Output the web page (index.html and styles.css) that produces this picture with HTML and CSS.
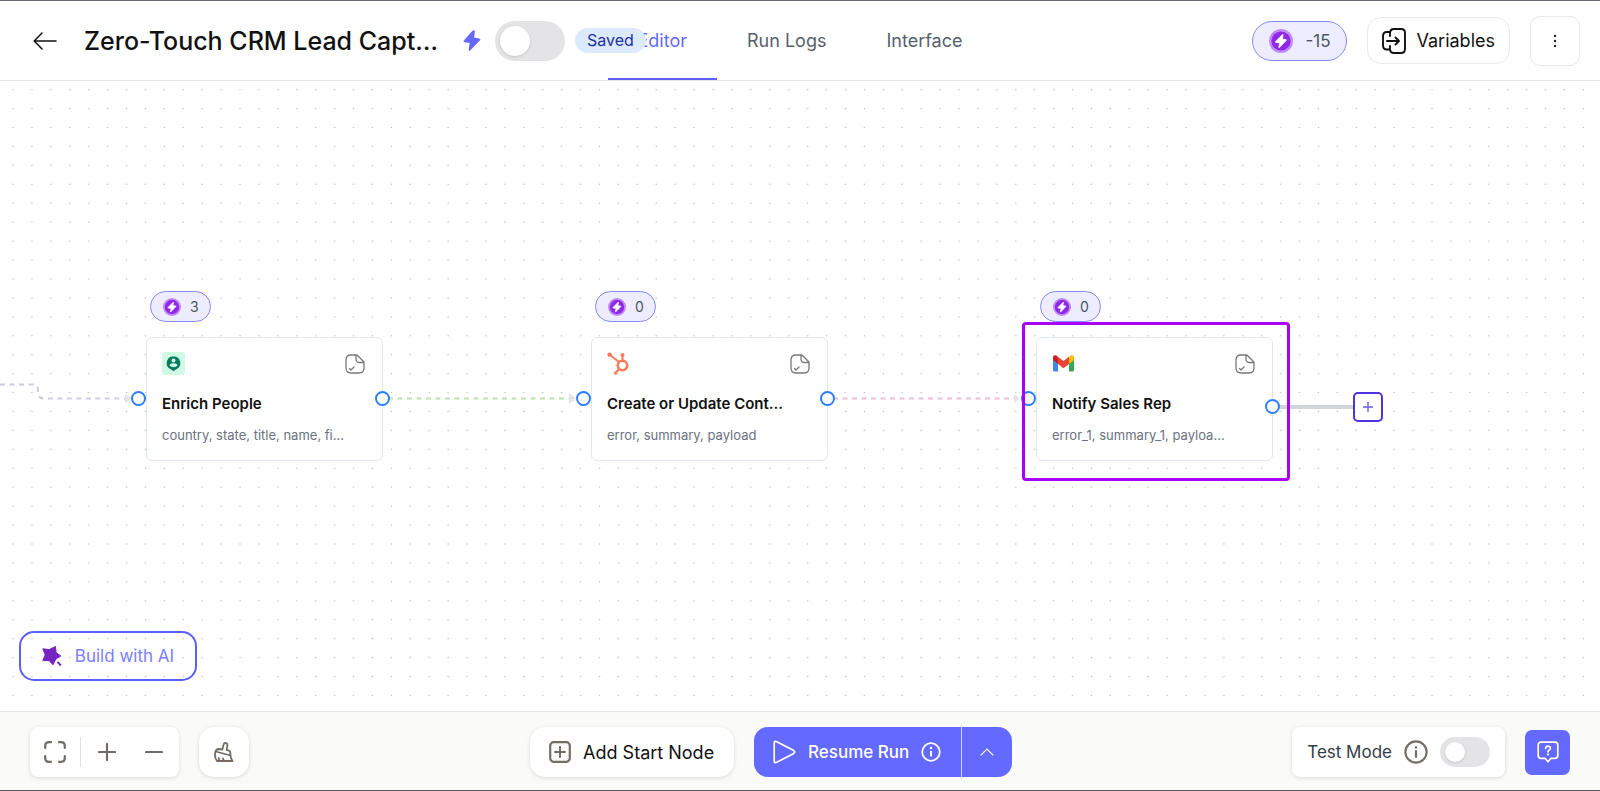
FILE: index.html
```html
<!DOCTYPE html>
<html lang="en">
<head>
<meta charset="utf-8">
<title>Workflow editor</title>
<link rel="stylesheet" href="styles.css">
</head>
<body>
<svg class="defs" aria-hidden="true">
  <symbol id="credit" viewBox="0 0 24 24">
    <circle cx="12" cy="12" r="12" fill="#c08af8"/>
    <circle cx="12" cy="12" r="9.6" fill="#9029e6"/>
    <path d="M13.600 5.500 6.600 12.600q-.5.700.3.800l3.800.5-.9 4.300q0 .8.600.3l6.800-7.100q.5-.7-.3-.8l-3.600-.5.800-4.200q0-.8-.5-.4z" fill="#fff" stroke="#fff" stroke-width=".8"/>
  </symbol>
  <symbol id="note" viewBox="0 0 20 20">
    <path d="M11 1H6Q1 1 1 6v8q0 5 5 5h8q5 0 5-5V8.500Q18.700 7.500 18 7L13 2Q12 1 11 1zM11 1.200V5q0 3.500 3.500 3.500H19M4.500 14.500l1.500 1.500 3-3" fill="none" stroke="#777" stroke-width="1.300" stroke-linecap="round" stroke-linejoin="round"/>
  </symbol>
</svg>

<header class="header">
  <div class="header-left">
    <button class="back" aria-label="Back">
      <svg width="24" height="18" viewBox="0 0 24 18"><path d="M23 9H1.500M9 1 1.200 9 9 17" fill="none" stroke="#111" stroke-width="1.500" stroke-linecap="round" stroke-linejoin="round"/></svg>
    </button>
    <h1 class="title">Zero-Touch CRM Lead Capt…</h1>
    <svg class="bolt" width="18" height="22" viewBox="0 0 18 22"><path d="M9.500.8.800 10.500q-.8 1.300.7 1.700l5.200.8-1 6.600q0 2 1.400.9l10-10.300q.8-1.400-.8-1.800l-5.200-.8.800-6q0-2.200-2.400-.8z" fill="#646aff"/></svg>
    <input class="switch switch-large" type="checkbox" aria-label="Activate workflow">
    <span class="saved">Saved</span>
  </div>
  <nav class="tabs">
    <a class="tab tab-active" href="#editor">Editor</a>
    <a class="tab" href="#logs">Run Logs</a>
    <a class="tab" href="#interface">Interface</a>
  </nav>
  <div class="header-right">
    <div class="credits">
      <svg width="24" height="24"><use href="#credit"/></svg>
      <span>-15</span>
    </div>
    <button class="outline variables">
      <svg width="24" height="26" viewBox="0 0 24 26"><path d="M8 8V5.500Q8 1 12 1h7q4 0 4 4v16q0 4-4 4h-7q-4 0-4-4v-3M8 4H5Q1 4 1 8v9.500q0 4 4 4h3M5 13h11.500M13.500 9.500 17 13l-3.500 3.500" fill="none" stroke="#111" stroke-width="1.900" stroke-linecap="round" stroke-linejoin="round"/></svg>
      Variables
    </button>
    <button class="outline more" aria-label="More">
      <svg width="4" height="14" viewBox="0 0 4 14"><g fill="#222"><circle cx="2" cy="2" r="1.200"/><circle cx="2" cy="7" r="1.200"/><circle cx="2" cy="12" r="1.200"/></g></svg>
    </button>
  </div>
</header>

<main class="canvas">
  <svg class="layer" width="100%" height="100%" aria-hidden="true">
    <defs>
      <pattern id="dots" x="3.600" y="-.8" width="18.920" height="18.930" patternUnits="userSpaceOnUse">
        <circle cx="9.400" cy="9.400" r=".8" fill="#bcbfc6"/>
      </pattern>
    </defs>
    <rect width="100%" height="100%" fill="url(#dots)"/>
    <g fill="none" stroke-width="2.600" stroke-dasharray="5 4.500">
      <path d="M0 303.500H32Q38 303.500 38 309v3q0 5.500 6 5.500H126" stroke="#cfc9ea" stroke-width="2"/>
      <path d="M388 317.500H570" stroke="#c9e6c2"/>
      <path d="M833 317.500H1014" stroke="#eccbdf"/>
    </g>
    <path d="M1279 326h75" stroke="#d1d5dc" stroke-width="4"/>
    <g fill="#e4e4e8"><path d="m125 313 7 4.500-7 4.500zM569 312l7 5.500-7 5.500zM1014 313l6 4.500-6 4.500z"/></g>
  </svg>

  <article class="node node-enrich">
    <div class="cost"><svg width="18" height="18"><use href="#credit"/></svg>3</div>
    <div class="card">
      <div class="card-top">
        <svg width="23" height="23" viewBox="0 0 23 23"><rect width="23" height="23" rx="3" fill="#d0fae5"/><path d="M11.500 4.500a6.600 6.600 0 0 1 2.700 12.700l-2.700 2-2.700-2A6.600 6.600 0 0 1 11.500 4.500z" fill="#067a5b"/><circle cx="11.500" cy="8.500" r="2" fill="#d0fae5"/><path d="M7.500 13.500q.5-2.200 4-2.200t4 2.200q-1.500 1.800-4 1.800t-4-1.800z" fill="#d0fae5"/></svg>
        <svg width="20" height="20"><use href="#note"/></svg>
      </div>
      <h2 class="card-title">Enrich People</h2>
      <p class="card-text">country, state, title, name, fi…</p>
    </div>
    <i class="port port-in"></i><i class="port port-out"></i>
  </article>

  <article class="node node-contact">
    <div class="cost"><svg width="18" height="18"><use href="#credit"/></svg>0</div>
    <div class="card">
      <div class="card-top">
        <svg width="23" height="23" viewBox="0 0 23 23"><g fill="none" stroke="#ff7a59" stroke-width="2"><circle cx="15.500" cy="13.500" r="4.700" stroke-width="2.600"/><path d="M12 10 3 3M15.500 9V3M12 17l-3 3.500"/></g><g fill="#ff7a59"><circle cx="2.600" cy="2.600" r="2.200"/><circle cx="15.500" cy="3" r="2"/><circle cx="8.600" cy="21" r="1.800"/></g></svg>
        <svg width="20" height="20"><use href="#note"/></svg>
      </div>
      <h2 class="card-title">Create or Update Cont…</h2>
      <p class="card-text">error, summary, payload</p>
    </div>
    <i class="port port-in"></i><i class="port port-out"></i>
  </article>

  <article class="node node-notify">
    <div class="cost"><svg width="18" height="18"><use href="#credit"/></svg>0</div>
    <div class="card">
      <div class="card-top">
        <svg width="23" height="23" viewBox="0 0 23 23"><path d="M1 5v13q0 1.500 1.500 1.500H6V8.500z" fill="#4285f4"/><path d="M22 5v13q0 1.500-1.500 1.500H17V8.500z" fill="#34a853"/><path d="M17 5.500V12l5-4V5.500C22 3 19.500 2.600 18 3.800z" fill="#fbbc04"/><path d="M6 5.500V12L1 8V5.500C1 3 3.500 2.600 5 3.800z" fill="#c5221f"/><path d="M6 12V4.700l5.500 4.200L17 4.700V12l-5.500 4.200z" fill="#ea4335"/></svg>
        <svg width="20" height="20"><use href="#note"/></svg>
      </div>
      <h2 class="card-title">Notify Sales Rep</h2>
      <p class="card-text">error_1, summary_1, payloa…</p>
    </div>
    <i class="port port-in"></i><i class="port port-out port-last"></i>
  </article>

  <div class="highlight"></div>
  <button class="add-step" aria-label="Add step">
    <svg width="10" height="10" viewBox="0 0 10 10"><path d="M5 0v10M0 5h10" stroke="#6a5fe6" stroke-width="1.400"/></svg>
  </button>

  <button class="build">
    <svg width="20" height="20" viewBox="0 0 20 20"><path d="M13.500.5 14 6.500 18.800 10 13.800 13 11 18.800 7 14.500.8 14.600 3.200 8.800.8 2.800 7.200 3.600z" fill="#7424c2" stroke="#7424c2" stroke-linejoin="round"/><path d="m15.500 15.800 3.300 3.700" stroke="#7424c2" stroke-width="2"/></svg>
    Build with AI
  </button>
</main>

<footer class="footer">
  <div class="group">
    <div class="box zoom">
      <button class="tool" aria-label="Fit view"><svg width="22" height="22" viewBox="0 0 22 22"><path d="M1.200 7V5q0-3.800 3.800-3.800h2M15 1.200h2q3.800 0 3.800 3.800v2M20.800 15v2q0 3.800-3.800 3.800h-2M7 20.800H5q-3.800 0-3.800-3.800v-2" fill="none" stroke="#736b66" stroke-width="2.200" stroke-linecap="round"/></svg></button>
      <span class="divider"></span>
      <button class="tool" aria-label="Zoom in"><svg width="18" height="18" viewBox="0 0 18 18"><path d="M9 1v16M1 9h16" stroke="#736b66" stroke-width="2.200" stroke-linecap="round"/></svg></button>
      <button class="tool" aria-label="Zoom out"><svg width="18" height="18" viewBox="0 0 18 18"><path d="M1 9h16" stroke="#736b66" stroke-width="2.200" stroke-linecap="round"/></svg></button>
    </div>
    <button class="box brush" aria-label="Tidy up">
      <svg width="20" height="20" viewBox="0 0 20 20"><path d="M8.300 7.500 9.600 2.500Q10 .8 11.800 1q2 .4 1.600 2.400L12.600 8l2.400.7q1.300.5 1.300 1.800l.2 3q.3 3.500 2 5.500H3Q.2 15.500 1.200 10.500 1.800 7 5 7zM1.800 9.500l14.500 4M5.500 19l-.8-3M10 19l-1-2.500" fill="none" stroke="#736b66" stroke-width="1.800" stroke-linecap="round" stroke-linejoin="round"/></svg>
    </button>
  </div>

  <div class="group">
    <button class="box start">
      <svg width="22" height="22" viewBox="0 0 22 22"><rect x="1.200" y="1.200" width="19.600" height="19.600" rx="3.500" fill="none" stroke="#736b66" stroke-width="2.200"/><path d="M11 6v10M6 11h10" stroke="#736b66" stroke-width="2" stroke-linecap="round"/></svg>
      Add Start Node
    </button>
    <div class="run">
      <button class="run-main">
        <svg width="23" height="24" viewBox="0 0 23 24"><path d="M1.200 3.500v17q0 3 2.600 1.800l16.500-8.500q2.700-1.800 0-3.600L3.800 1.700Q1.200.5 1.200 3.500z" fill="none" stroke="#fff" stroke-width="1.700"/></svg>
        Resume Run
        <svg width="20" height="20" viewBox="0 0 20 20"><circle cx="10" cy="10" r="8.800" fill="none" stroke="#fff" stroke-width="1.800"/><path d="M10 9v5.500" stroke="#fff" stroke-width="1.900"/><circle cx="10" cy="6" r="1.200" fill="#fff"/></svg>
      </button>
      <button class="run-menu" aria-label="Run options"><svg width="14" height="8" viewBox="0 0 14 8"><path d="M.7 7.300 7 1l6.300 6.300" fill="none" stroke="#fff" stroke-width="1.200"/></svg></button>
    </div>
  </div>

  <div class="group">
    <div class="box test">
      <label for="test-mode">Test Mode</label>
      <svg width="24" height="24" viewBox="0 0 24 24"><circle cx="12" cy="12" r="10.600" fill="none" stroke="#736b66" stroke-width="2.100"/><path d="M12 11v6" stroke="#736b66" stroke-width="2.200" stroke-linecap="round"/><circle cx="12" cy="7.500" r="1.300" fill="#736b66"/></svg>
      <input class="switch" id="test-mode" type="checkbox">
    </div>
    <button class="help" aria-label="Help">
      <svg width="22" height="22" viewBox="0 0 22 22"><path d="M4 1.200h14q2.800 0 2.800 2.800v10.500q0 2.800-2.800 2.800h-4L11 20.800 8 17.300H4q-2.800 0-2.800-2.800V4Q1.200 1.200 4 1.200z" fill="none" stroke="#fff" stroke-width="1.700" stroke-linejoin="round"/><path d="M8.600 7.300q.2-2.200 2.400-2.200 2.400.1 2.400 2.200 0 1.300-1.400 2-1 .6-1 1.600" fill="none" stroke="#fff" stroke-width="1.700" stroke-linecap="round"/><circle cx="11" cy="13.500" r="1.100" fill="#fff"/></svg>
    </button>
  </div>
</footer>
</body>
</html>
```
FILE: styles.css
```css
* { box-sizing: border-box; }
body {
  margin: 0;
  min-height: 100vh;
  display: flex;
  flex-direction: column;
  border-top: 1px solid #6b6876;
  border-bottom: 1px solid #5c5b63;
  background: #fff;
  color: #111;
  font-family: Inter, "Liberation Sans", sans-serif;
  font-size: 18px;
}
button {
  display: flex;
  align-items: center;
  justify-content: center;
  padding: 0;
  border: 0;
  background: none;
  color: inherit;
  font: inherit;
  white-space: nowrap;
}
svg { display: block; flex: none; }
.defs { position: absolute; width: 0; height: 0; }

.header {
  display: grid;
  grid-template-columns: minmax(0, 1fr) auto minmax(0, 1fr);
  height: 80px;
  border-bottom: 1px solid #e5e7eb;
}
.header-left {
  position: relative;
  z-index: 1;
  display: flex;
  align-items: center;
  padding-left: 33px;
}
.back { margin-right: 27px; }
.title {
  flex: none;
  width: 351px;
  margin: 0 28px 0 0;
  font-size: 25px;
  font-weight: 500;
  line-height: 32px;
  white-space: nowrap;
}
.switch {
  flex: none;
  appearance: none;
  display: flex;
  align-items: center;
  width: 50px;
  height: 30px;
  margin: 0;
  padding: 5px;
  border-radius: 20px;
  background: #e4e4e6;
}
.switch::before {
  content: "";
  width: 20px;
  height: 20px;
  border-radius: 50%;
  background: #fff;
  box-shadow: 0 1px 3px #0002;
}
.switch-large { width: 70px; height: 40px; margin: 0 10px 0 14px; }
.switch-large::before { width: 30px; height: 30px; }
.saved {
  flex: none;
  padding: 0 12px;
  border-radius: 13px;
  background: #dbeafe;
  color: #1e2fa0;
  font-size: 16px;
  line-height: 25px;
}
.tabs { display: flex; }
.tab {
  display: flex;
  align-items: center;
  padding: 2px 30px 0;
  border-bottom: 2px solid transparent;
  color: #55606e;
  text-decoration: none;
  white-space: nowrap;
}
.tab-active { border-color: #5b5ff5; color: #646aff; }
.header-right {
  display: flex;
  align-items: center;
  justify-content: flex-end;
  gap: 20px;
  padding-right: 20px;
}
.credits, .cost {
  display: flex;
  align-items: center;
  border: 1px solid #8489ff;
  background: #ededff;
  color: #4b5563;
}
.credits { gap: 12px; height: 40px; padding: 0 16px; border-radius: 20px; font-size: 17px; }
.outline { border: 1px solid #e9e9ec; border-radius: 14px; }
.variables { gap: 10px; height: 47px; padding: 0 14px; }
.more { width: 50px; height: 50px; border-radius: 10px; }

.canvas { position: relative; flex: 1; overflow: hidden; }
.layer { position: absolute; inset: 0; }
.node { position: absolute; top: 210px; width: 237px; }
.node-enrich { left: 146px; }
.node-contact { left: 591px; }
.node-notify { left: 1036px; }
.cost {
  gap: 9px;
  width: fit-content;
  height: 31px;
  margin: 0 0 15px 4px;
  padding: 0 11px 0 12px;
  border-radius: 16px;
  font-size: 14px;
}
.card {
  height: 124px;
  padding: 14px 15px;
  border: 1px solid #e2e8f0;
  border-radius: 6px;
  background: #fff;
}
.card-top { display: flex; align-items: center; justify-content: space-between; padding-right: 2px; }
.card-title { margin: 18px 0 11px; font-size: 15px; font-weight: 600; line-height: 22px; white-space: nowrap; }
.card-text { margin: 0; color: #6b7280; font-size: 13px; line-height: 18px; white-space: nowrap; }
.port {
  position: absolute;
  top: 100px;
  width: 15px;
  height: 15px;
  border: 2px solid #2b7fff;
  border-radius: 50%;
  background: #fff;
}
.port-in { left: -15px; }
.port-out { right: -7px; }
.port-last { top: 108px; }
.highlight {
  position: absolute;
  left: 1022px;
  top: 241px;
  width: 268px;
  height: 159px;
  border: 3px solid #a800f8;
  border-radius: 4px;
}
.add-step {
  position: absolute;
  left: 1353px;
  top: 311px;
  width: 30px;
  height: 30px;
  border: 2px solid #4a35e0;
  border-radius: 5px;
  background: #fff;
}
.build {
  position: absolute;
  left: 19px;
  bottom: 30px;
  gap: 13px;
  width: 178px;
  height: 50px;
  border: 2px solid #5b5ff5;
  border-radius: 15px;
  color: #7b80ff;
  font-size: 17px;
}

.footer {
  display: flex;
  align-items: center;
  justify-content: space-between;
  padding: 15px 30px 13px;
  border-top: 1px solid #e5e5e5;
  background: #fafaf9;
}
.group { display: flex; align-items: center; gap: 20px; }
.box {
  display: flex;
  align-items: center;
  height: 50px;
  border-radius: 8px;
  background: #fff;
  box-shadow: 0 1px 4px #0002;
}
.tool { width: 47px; height: 50px; }
.zoom { padding: 0 2px 0 0; }
.zoom .tool:first-child { width: 50px; }
.divider { width: 1px; height: 30px; margin-right: 2px; background: #dfe0ea; }
.brush { width: 50px; border-radius: 15px; }
.start { gap: 12px; width: 204px; border-radius: 15px; }
.run { display: flex; height: 50px; border-radius: 14px; overflow: hidden; background: #646aff; color: #fff; }
.run-main { gap: 12px; width: 208px; border-right: 1px solid #d6d8ff; font-size: 17px; font-weight: 500; }
.run-menu { width: 50px; }
.test { gap: 12px; padding: 0 15px; color: #333d49; font-size: 17px; white-space: nowrap; }
.help { width: 45px; height: 45px; border-radius: 7px; background: #646aff; }
```
